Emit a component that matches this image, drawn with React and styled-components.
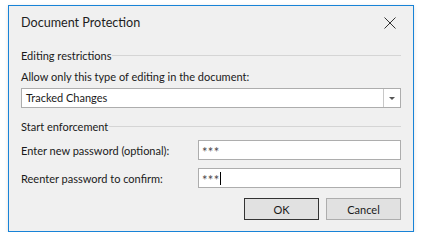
import styled, { createGlobalStyle } from "styled-components";

const GlobalStyle = createGlobalStyle`
  html, body {
    margin: 0;
    padding: 0;
    background: #ffffff;
  }
  body {
    font-family: Lato, "Noto Sans", sans-serif;
    font-size: 11px;
    color: #1a1a1a;
  }
`;

const Dialog = styled.div`
  box-sizing: border-box;
  width: 406px;
  height: 227px;
  margin: 5px 0 0 8px;
  border: 1px solid #1883d7;
  background: #f0f0f0;
  box-shadow: 0 1px 4px rgba(0, 0, 0, 0.12);
  padding: 0 12px 0 12px;
  display: flex;
  flex-direction: column;
`;

const TitleBar = styled.div`
  box-sizing: border-box;
  height: 31px;
  padding-top: 2px;
  display: flex;
  align-items: center;
  justify-content: space-between;
`;

const Title = styled.div`
  font-size: 12.6px;
  color: #1e1e1e;
`;

const CloseButton = styled.div`
  width: 13px;
  height: 13px;
  margin-right: 5px;
  display: flex;
  align-items: center;
  justify-content: center;
`;

const GroupHeader = styled.div`
  display: flex;
  align-items: center;
  height: 16px;
  margin-top: ${(props) => props.top}px;
  &::after {
    content: "";
    flex: 1;
    height: 1px;
    background: #d5d5d5;
    margin-left: 1px;
  }
`;

const Label = styled.div`
  height: 16px;
  line-height: 16px;
  margin-top: ${(props) => props.top || 0}px;
  white-space: nowrap;
`;

const Combo = styled.div`
  box-sizing: border-box;
  height: 20px;
  margin-top: 3px;
  border: 1px solid #adadad;
  background: #ffffff;
  display: flex;
  align-items: stretch;
`;

const ComboText = styled.div`
  flex: 1;
  padding-left: 4px;
  line-height: 18px;
`;

const ComboArrow = styled.div`
  width: 16px;
  border-left: 1px solid #c8c8c8;
  display: flex;
  align-items: center;
  justify-content: center;
  &::before {
    content: "";
    border-left: 3px solid transparent;
    border-right: 3px solid transparent;
    border-top: 3px solid #555555;
  }
`;

const FieldRow = styled.div`
  display: flex;
  align-items: center;
  height: 20px;
  margin-top: ${(props) => props.top}px;
`;

const FieldLabel = styled.div`
  width: 177px;
  white-space: nowrap;
`;

const Input = styled.div`
  box-sizing: border-box;
  flex: 1;
  height: 20px;
  border: 1px solid #adadad;
  background: #ffffff;
  padding-left: 3px;
  display: flex;
  align-items: center;
  color: #4a4a4a;
`;

const Mask = styled.span`
  font-size: 13px;
  line-height: 13px;
  height: 8px;
  letter-spacing: 0.3px;
`;

const Caret = styled.span`
  display: inline-block;
  width: 1px;
  height: 13px;
  background: #000;
  margin-left: 1px;
`;

const ButtonRow = styled.div`
  display: flex;
  justify-content: flex-end;
  gap: 7px;
  margin-top: 10px;
`;

const Button = styled.div`
  box-sizing: border-box;
  width: 75px;
  height: 22px;
  border: 1px solid ${(props) => (props.primary ? "#333333" : "#adadad")};
  background: #e1e1e1;
  display: flex;
  align-items: center;
  justify-content: center;
`;

const App = () => {
  return (
    <>
      <GlobalStyle />
      <Dialog>
        <TitleBar>
          <Title>Document Protection</Title>
          <CloseButton>
            <svg width="12" height="12" viewBox="0 0 12 12">
              <path d="M0.5 0.5 L11.5 11.5 M11.5 0.5 L0.5 11.5" stroke="#333" strokeWidth="1" />
            </svg>
          </CloseButton>
        </TitleBar>
        <GroupHeader top={10}>Editing restrictions</GroupHeader>
        <Label top={6}>Allow only this type of editing in the document:</Label>
        <Combo>
          <ComboText>Tracked Changes</ComboText>
          <ComboArrow />
        </Combo>
        <GroupHeader top={10}>Start enforcement</GroupHeader>
        <FieldRow top={6}>
          <FieldLabel>Enter new password (optional):</FieldLabel>
          <Input>
            <Mask>***</Mask>
          </Input>
        </FieldRow>
        <FieldRow top={8}>
          <FieldLabel>Reenter password to confirm:</FieldLabel>
          <Input>
            <Mask>***</Mask>
            <Caret />
          </Input>
        </FieldRow>
        <ButtonRow>
          <Button primary>OK</Button>
          <Button>Cancel</Button>
        </ButtonRow>
      </Dialog>
    </>
  );
};

export default App;
